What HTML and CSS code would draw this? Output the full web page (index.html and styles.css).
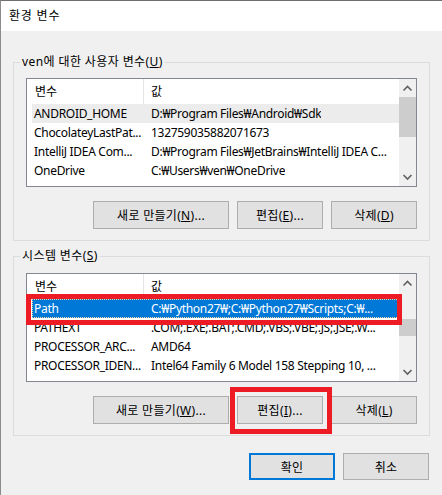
FILE: index.html
```html
<!DOCTYPE html>
<html lang="ko">
<head>
  <meta charset="UTF-8" />
  <meta name="viewport" content="width=device-width, initial-scale=1.0" />
  <title>환경 변수</title>
  <link rel="stylesheet" href="styles.css">
</head>
<body>
  <div class="window">
    <div class="titlebar">환경 변수</div>

    <div class="content">
      <fieldset class="group">
        <legend>ven에 대한 사용자 변수(<u>U</u>)</legend>
        <div class="group-body">
          <div class="list">
            <div class="list-body">
              <div class="list-head">
                <span class="head-name">변수</span>
                <span class="head-value">값</span>
              </div>
              <div class="row row-hover"><span class="cell-name">ANDROID_HOME</span><span class="cell-value">D:₩Program Files₩Android₩Sdk</span></div>
              <div class="row"><span class="cell-name">ChocolateyLastPat...</span><span class="cell-value">132759035882071673</span></div>
              <div class="row"><span class="cell-name">IntelliJ IDEA Com...</span><span class="cell-value">D:₩Program Files₩JetBrains₩IntelliJ IDEA C...</span></div>
              <div class="row"><span class="cell-name">OneDrive</span><span class="cell-value">C:₩Users₩ven₩OneDrive</span></div>
            </div>
            <div class="scrollbar">
              <div class="arrow">
                <svg width="17" height="17" viewBox="0 0 17 17"><polyline points="4.5,11.5 8.5,7.5 12.5,11.5" /></svg>
              </div>
              <div class="track"><div class="thumb thumb-user"></div></div>
              <div class="arrow">
                <svg width="17" height="17" viewBox="0 0 17 17"><polyline points="4.5,6 8.5,10 12.5,6" /></svg>
              </div>
            </div>
          </div>

          <div class="buttons">
            <button class="btn btn-wide">새로 만들기(<u>N</u>)...</button>
            <button class="btn">편집(<u>E</u>)...</button>
            <button class="btn">삭제(<u>D</u>)</button>
          </div>
        </div>
      </fieldset>

      <fieldset class="group group-system">
        <legend>시스템 변수(<u>S</u>)</legend>
        <div class="group-body">
          <div class="list">
            <div class="list-body">
              <div class="list-head">
                <span class="head-name">변수</span>
                <span class="head-value">값</span>
              </div>
              <div class="row row-selected marked"><span class="cell-name">Path</span><span class="cell-value">C:₩Python27₩;C:₩Python27₩Scripts;C:₩...</span></div>
              <div class="row"><span class="cell-name">PATHEXT</span><span class="cell-value">.COM;.EXE;.BAT;.CMD;.VBS;.VBE;.JS;.JSE;.W...</span></div>
              <div class="row"><span class="cell-name">PROCESSOR_ARC...</span><span class="cell-value">AMD64</span></div>
              <div class="row"><span class="cell-name">PROCESSOR_IDEN...</span><span class="cell-value">Intel64 Family 6 Model 158 Stepping 10, ...</span></div>
            </div>
            <div class="scrollbar">
              <div class="arrow">
                <svg width="17" height="17" viewBox="0 0 17 17"><polyline points="4.5,11.5 8.5,7.5 12.5,11.5" /></svg>
              </div>
              <div class="track"><div class="thumb thumb-system"></div></div>
              <div class="arrow">
                <svg width="17" height="17" viewBox="0 0 17 17"><polyline points="4.5,6 8.5,10 12.5,6" /></svg>
              </div>
            </div>
          </div>

          <div class="buttons">
            <button class="btn btn-wide">새로 만들기(<u>W</u>)...</button>
            <div class="btn-mark"><button class="btn">편집(<u>I</u>)...</button></div>
            <button class="btn">삭제(<u>L</u>)</button>
          </div>
        </div>
      </fieldset>

      <div class="dialog-buttons">
        <button class="btn btn-default">확인</button>
        <button class="btn">취소</button>
      </div>
    </div>
  </div>
</body>
</html>
```

FILE: styles.css
```css
body {
  margin: 0;
  padding: 0;
  background-color: #f0f0f0;
  font-family: "Noto Sans", "Noto Sans CJK KR", sans-serif;
  font-size: 12px;
  color: #000;
}
.window {
  width: 442px;
  height: 495px;
  box-sizing: border-box;
  border-top: 1px solid #6e6e6e;
  border-left: 1px solid #8c8c8c;
  background-color: #f0f0f0;
  overflow: hidden;
}
.titlebar {
  height: 30px;
  line-height: 30px;
  padding-left: 8px;
  letter-spacing: 0.8px;
  background-color: #fff;
}
.content {
  padding: 0 12px;
}
.group {
  margin: 23px 0 0;
  padding: 0;
  min-width: 0;
  border: 1px solid #dcdcdc;
}
.group legend {
  margin-left: 6px;
  padding: 0 2px;
  line-height: 16px;
  letter-spacing: 0.4px;
}
.group-body {
  padding: 8px 12px 11px;
}
.group-system {
  margin-top: 7px;
}
.group-system .group-body {
  padding-top: 9px;
}
.list {
  display: flex;
  height: 109px;
  box-sizing: border-box;
  border: 1px solid #828790;
  background-color: #fff;
}
.list-body {
  flex: 1;
  min-width: 0;
}
.list-head {
  display: flex;
  height: 25px;
  line-height: 25px;
}
.head-name {
  width: 117px;
  box-sizing: border-box;
  padding-left: 8px;
  border-right: 1px solid #e5e5e5;
}
.head-value {
  padding-left: 7px;
}
.row {
  display: flex;
  height: 19px;
  line-height: 19px;
  margin-left: 5px;
  white-space: nowrap;
  letter-spacing: -0.3px;
}
.cell-name {
  width: 112px;
  flex-shrink: 0;
  box-sizing: border-box;
  padding-left: 2px;
  overflow: hidden;
}
.cell-value {
  padding-left: 7px;
  overflow: hidden;
}
.row-hover {
  background-color: #ececec;
}
.row-selected {
  background-color: #0078d7;
  color: #fff;
  outline: 1px dotted #f3d6a0;
  outline-offset: -1px;
}
.marked {
  position: relative;
}
.marked::after {
  content: "";
  position: absolute;
  top: -5px;
  bottom: -7px;
  left: -6px;
  right: -3px;
  border: 5px solid #ed1c24;
}
.scrollbar {
  width: 17px;
  display: flex;
  flex-direction: column;
  background-color: #f0f0f0;
}
.arrow {
  height: 17px;
}
.arrow svg {
  display: block;
  fill: none;
  stroke: #606060;
  stroke-width: 1.6;
}
.track {
  flex: 1;
}
.thumb {
  background-color: #cdcdcd;
}
.thumb-user {
  margin-top: 1px;
  height: 40px;
}
.thumb-system {
  margin-top: 28px;
  height: 17px;
}
.buttons {
  display: flex;
  justify-content: flex-end;
  gap: 8px;
  margin-top: 14px;
}
.btn {
  width: 86px;
  height: 28px;
  padding: 0;
  background-color: #e1e1e1;
  border: 1px solid #adadad;
  font-family: inherit;
  font-size: 12px;
  letter-spacing: 0.3px;
  color: #000;
}
.btn-wide {
  width: 136px;
}
.btn-mark {
  display: flex;
  position: relative;
}
.btn-mark::after {
  content: "";
  position: absolute;
  top: -9px;
  bottom: -10px;
  left: -7px;
  right: -9px;
  border: 5px solid #ed1c24;
}
.dialog-buttons {
  display: flex;
  justify-content: flex-end;
  gap: 8px;
  margin: 17px 1px 0 0;
}
.dialog-buttons .btn {
  height: 27px;
}
.btn-default {
  border: 2px solid #0078d7;
}
```
